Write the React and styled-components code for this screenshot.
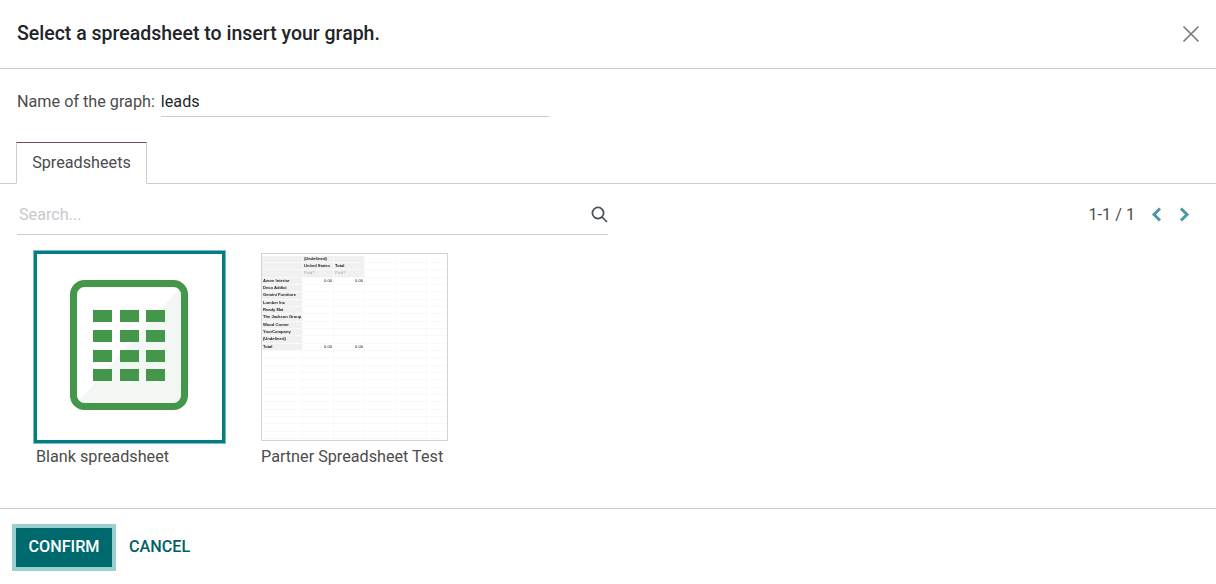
import React from 'react'
import styled, { createGlobalStyle } from 'styled-components'

const GlobalStyle = createGlobalStyle`
    html, body {
        margin: 0;
        padding: 0;
        background: #fff;
        font-family: Roboto, "Liberation Sans", sans-serif;
        color: #4c4c4c;
    }
`

const Dialog = styled.div`
    width: 1216px;
    height: 584px;
    display: flex;
    flex-direction: column;
    overflow: hidden;
    background: #fff;
`

const Header = styled.header`
    flex: none;
    height: 69px;
    display: flex;
    align-items: center;
    justify-content: space-between;
    padding: 0 16px 1px 17px;
    box-sizing: border-box;
    border-bottom: 1px solid #c9ccd2;
`

const Title = styled.h4`
    margin: 0;
    font-size: 19.5px;
    font-weight: 500;
    color: #212529;
`

const CloseButton = styled.button`
    border: 0;
    background: none;
    padding: 0;
    width: 18px;
    height: 18px;
    display: flex;
    color: #777;
`

const Body = styled.main`
    flex: 1;
    display: flex;
    flex-direction: column;
`

const NameRow = styled.div`
    display: flex;
    align-items: flex-end;
    gap: 6px;
    height: 48px;
    padding-left: 17px;
`

const NameLabel = styled.label`
    font-size: 16.2px;
    line-height: 20px;
    padding-bottom: 5px;
`

const NameInput = styled.div`
    width: 388px;
    box-sizing: border-box;
    height: 28px;
    line-height: 26px;
    font-size: 16.2px;
    color: #212529;
    border-bottom: 1px solid #c9ccd2;
`

const Tabs = styled.div`
    display: flex;
    box-sizing: border-box;
    height: 42px;
    margin-top: 25px;
    padding-left: 16px;
    border-bottom: 1px solid #c9ccd2;
`

const Tab = styled.div`
    width: 131px;
    box-sizing: border-box;
    height: 42px;
    line-height: 40px;
    text-align: center;
    font-size: 16.2px;
    background: #fff;
    border: 1px solid #c9ccd2;
    border-top-color: #714b67;
    border-bottom-color: #fff;
`

const SearchBar = styled.div`
    display: flex;
    align-items: flex-start;
    justify-content: space-between;
    height: 51px;
    padding: 0 26px 0 17px;
`

const SearchField = styled.div`
    width: 591px;
    height: 51px;
    box-sizing: border-box;
    display: flex;
    align-items: center;
    justify-content: space-between;
    padding: 10px 0 0 2px;
    border-bottom: 1px solid #c9ccd2;
    font-size: 16.2px;
    color: #c8c9cc;
    svg {
        color: #495057;
    }
`

const Pager = styled.div`
    display: flex;
    align-items: center;
    height: 50px;
    padding-top: 10px;
    box-sizing: border-box;
    font-size: 16.2px;
    color: #4c4c4c;
    span {
        margin-right: 16px;
    }
    svg {
        color: #4f97a0;
    }
    svg + svg {
        margin-left: 17px;
    }
`

const Cards = styled.div`
    display: flex;
    align-items: flex-start;
    padding: 15px 0 0 33px;
    gap: 35px;
`

const Card = styled.div`
    display: flex;
    flex-direction: column;
`

const BlankPreview = styled.div`
    width: 193px;
    height: 194px;
    box-sizing: border-box;
    display: flex;
    align-items: center;
    justify-content: center;
    border: 4px solid #017e84;
    outline: 1px solid #7fbabd;
    outline-offset: -1px;
    padding: 0 2px 5px 0;
`

const SheetPreview = styled.div`
    width: 187px;
    height: 188px;
    margin-top: 3px;
    box-sizing: border-box;
    border: 1px solid #ced4da;
    overflow: hidden;
    background: #fff;
`

const CardLabel = styled.div`
    font-size: 16.2px;
    line-height: 20px;
    margin-top: ${({ $gap }) => $gap}px;
    padding-left: ${({ $indent }) => $indent}px;
`

const SheetTable = styled.div`
    display: grid;
    grid-template-columns: 41px 31px 31px 31px 31px 31px;
    grid-auto-rows: 7.35px;
    padding-top: 1.5px;
    font-family: "Liberation Sans", sans-serif;
    font-size: 4.1px;
    font-weight: 700;
    color: #222;
    filter: blur(0.3px);
`

const SheetCell = styled.div`
    box-sizing: border-box;
    border-right: 1px solid #f8f9f9;
    border-bottom: 1px solid #f8f9f9;
    line-height: 6.4px;
    padding: 0 1px;
    white-space: nowrap;
    overflow: hidden;
    background: ${({ $head }) => ($head ? '#f0f0f0' : '#fff')};
    color: ${({ $muted }) => ($muted ? '#aaa' : '#222')};
    font-weight: ${({ $plain }) => ($plain ? 400 : 700)};
    text-align: ${({ $right }) => ($right ? 'right' : 'left')};
`

const Footer = styled.footer`
    flex: none;
    height: 76px;
    box-sizing: border-box;
    border-top: 1px solid #c9ccd2;
    display: flex;
    align-items: center;
    gap: 13px;
    padding: 1px 0 0 12px;
`

const Confirm = styled.button`
    width: 104px;
    height: 47px;
    box-sizing: border-box;
    border: 4px solid #9ccfd0;
    background: #00696e;
    color: #fff;
    font-family: inherit;
    font-size: 16.2px;
    font-weight: 500;
    padding: 0 0 1px;
`

const Cancel = styled.button`
    border: 0;
    background: none;
    padding: 0 0 1px;
    color: #015f64;
    font-family: inherit;
    font-size: 16.2px;
    font-weight: 500;
`

const SheetIcon = () => (
    <svg width="118" height="130" viewBox="0 0 118 130">
        <path d="M111 7 L7 123 H104 a7 7 0 0 0 7-7 Z" fill="#f3f7f3" />
        <rect x="3.5" y="3.5" width="111" height="123" rx="11" fill="none" stroke="#43964a" strokeWidth="7" />
        {[30, 50, 70, 89].map((y) =>
            [23, 50, 76].map((x) => (
                <rect key={`${x}-${y}`} x={x} y={y} width="19" height="12" fill="#43964a" />
            ))
        )}
    </svg>
)

const rows = [
    ['', '(Undefined)', ''],
    ['', 'United States', 'Total'],
    ['', 'Paid?', 'Paid?'],
    ['Azure Interior', '0.00', '0.00'],
    ['Deco Addict', '', ''],
    ['Gemini Furniture', '', ''],
    ['Lumber Inc', '', ''],
    ['Ready Mat', '', ''],
    ['The Jackson Group', '', ''],
    ['Wood Corner', '', ''],
    ['YourCompany', '', ''],
    ['(Undefined)', '', ''],
    ['Total', '0.00', '0.00'],
]

const SheetRows = () => (
    <SheetTable>
        {rows.map((row, r) => (
            <React.Fragment key={r}>
                <SheetCell $head>{row[0]}</SheetCell>
                {[1, 2].map((c) => (
                    <SheetCell
                        key={c}
                        $head={r < 3}
                        $muted={r === 2}
                        $plain={r >= 2}
                        $right={r > 2}
                    >
                        {row[c]}
                    </SheetCell>
                ))}
                <SheetCell />
                <SheetCell />
                <SheetCell />
            </React.Fragment>
        ))}
        {Array.from({ length: 72 }, (_, i) => (
            <SheetCell key={i} />
        ))}
    </SheetTable>
)

const App = () => (
    <Dialog>
        <GlobalStyle />
        <Header>
            <Title>Select a spreadsheet to insert your graph.</Title>
            <CloseButton aria-label="Close">
                <svg width="18" height="18" viewBox="0 0 18 18" fill="none" stroke="currentColor" strokeWidth="1.6">
                    <path d="M1.5 1.5 L16.5 16.5 M16.5 1.5 L1.5 16.5" />
                </svg>
            </CloseButton>
        </Header>
        <Body>
            <NameRow>
                <NameLabel>Name of the graph:</NameLabel>
                <NameInput>leads</NameInput>
            </NameRow>
            <Tabs>
                <Tab>Spreadsheets</Tab>
            </Tabs>
            <SearchBar>
                <SearchField>
                    Search...
                    <svg width="17" height="17" viewBox="0 0 17 17" fill="none" stroke="currentColor" strokeWidth="1.7">
                        <circle cx="7" cy="7" r="5.6" />
                        <path d="M11 11 L16 16" />
                    </svg>
                </SearchField>
                <Pager>
                    <span>1-1 / 1</span>
                    <svg width="11" height="15" viewBox="0 0 11 15" fill="none" stroke="currentColor" strokeWidth="3">
                        <path d="M9 1.5 L3 7.5 L9 13.5" />
                    </svg>
                    <svg width="11" height="15" viewBox="0 0 11 15" fill="none" stroke="currentColor" strokeWidth="3">
                        <path d="M2 1.5 L8 7.5 L2 13.5" />
                    </svg>
                </Pager>
            </SearchBar>
            <Cards>
                <Card>
                    <BlankPreview>
                        <SheetIcon />
                    </BlankPreview>
                    <CardLabel $gap={3} $indent={3}>Blank spreadsheet</CardLabel>
                </Card>
                <Card>
                    <SheetPreview>
                        <SheetRows />
                    </SheetPreview>
                    <CardLabel $gap={6} $indent={0}>Partner Spreadsheet Test</CardLabel>
                </Card>
            </Cards>
        </Body>
        <Footer>
            <Confirm>CONFIRM</Confirm>
            <Cancel>CANCEL</Cancel>
        </Footer>
    </Dialog>
)

export default App
